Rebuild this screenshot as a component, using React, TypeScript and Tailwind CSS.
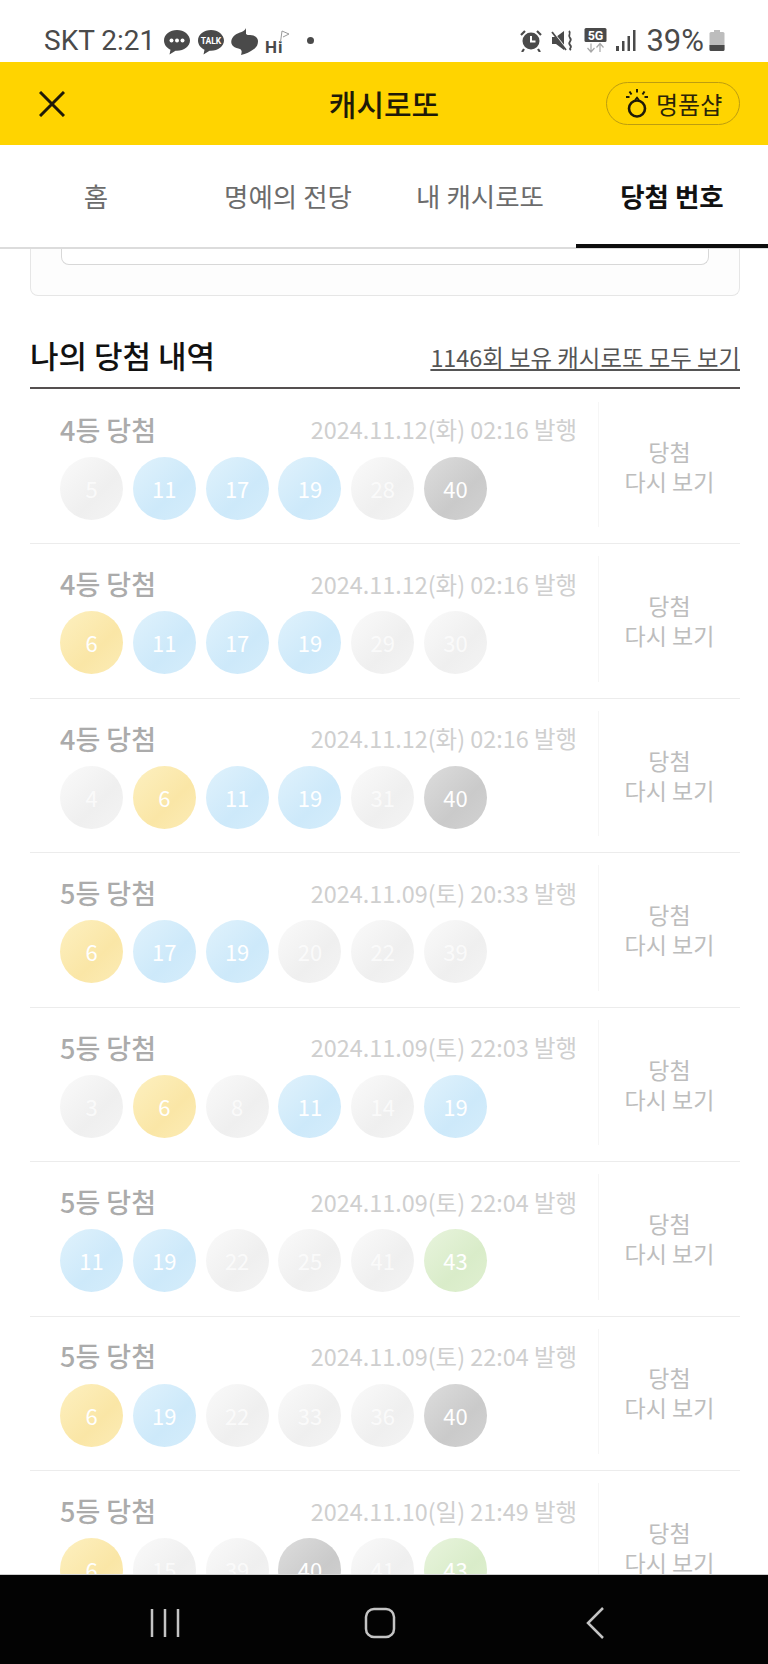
import React from "react";

const KR = "font-['Noto_Sans_CJK_KR','Noto_Sans',sans-serif]";

type Tone = "g" | "b" | "y" | "d" | "l";

const tones: Record<Tone, string> = {
  g: "bg-[linear-gradient(135deg,#fafafa_0%,#efefef_60%,#f4f4f4_100%)] text-white/70",
  b: "bg-[linear-gradient(135deg,#e0f2fc_0%,#cde9fa_60%,#d5edfb_100%)] text-white",
  y: "bg-[linear-gradient(135deg,#fdf0c0_0%,#fae6a6_60%,#fcecb6_100%)] text-white",
  d: "bg-[linear-gradient(135deg,#dddddd_0%,#cacaca_60%,#d2d2d2_100%)] text-white",
  l: "bg-[linear-gradient(135deg,#e8f4dd_0%,#d9ecc9_60%,#e0f0d1_100%)] text-white",
};

type Row = { title: string; date: string; balls: [number, Tone][] };

const rows: Row[] = [
  { title: "4등 당첨", date: "2024.11.12(화) 02:16 발행", balls: [[5, "g"], [11, "b"], [17, "b"], [19, "b"], [28, "g"], [40, "d"]] },
  { title: "4등 당첨", date: "2024.11.12(화) 02:16 발행", balls: [[6, "y"], [11, "b"], [17, "b"], [19, "b"], [29, "g"], [30, "g"]] },
  { title: "4등 당첨", date: "2024.11.12(화) 02:16 발행", balls: [[4, "g"], [6, "y"], [11, "b"], [19, "b"], [31, "g"], [40, "d"]] },
  { title: "5등 당첨", date: "2024.11.09(토) 20:33 발행", balls: [[6, "y"], [17, "b"], [19, "b"], [20, "g"], [22, "g"], [39, "g"]] },
  { title: "5등 당첨", date: "2024.11.09(토) 22:03 발행", balls: [[3, "g"], [6, "y"], [8, "g"], [11, "b"], [14, "g"], [19, "b"]] },
  { title: "5등 당첨", date: "2024.11.09(토) 22:04 발행", balls: [[11, "b"], [19, "b"], [22, "g"], [25, "g"], [41, "g"], [43, "l"]] },
  { title: "5등 당첨", date: "2024.11.09(토) 22:04 발행", balls: [[6, "y"], [19, "b"], [22, "g"], [33, "g"], [36, "g"], [40, "d"]] },
  { title: "5등 당첨", date: "2024.11.10(일) 21:49 발행", balls: [[6, "y"], [15, "g"], [39, "g"], [40, "d"], [41, "g"], [43, "l"]] },
];

function Ball({ n, t }: { n: number; t: Tone }) {
  return (
    <div className={`flex h-[63px] w-[63px] shrink-0 items-center justify-center rounded-full text-[22px] ${tones[t]}`}>
      {n}
    </div>
  );
}

function ResultRow({ row }: { row: Row }) {
  return (
    <div className="flex h-[154.46px] shrink-0 border-b border-[#ececec] pt-3 pb-4">
      <div className="w-[569px] shrink-0 border-r border-[#f6f6f6] pr-[21px] pl-[30px] pt-[10px]">
        <div className="flex h-9 items-center justify-between">
          <span className="text-[27px] font-medium text-[#ababab]">{row.title}</span>
          <span className="text-[23.4px] text-[#cfcfcf]">{row.date}</span>
        </div>
        <div className="mt-[9px] flex gap-[9.8px]">
          {row.balls.map(([n, t], i) => (
            <Ball key={i} n={n} t={t} />
          ))}
        </div>
      </div>
      <div className="flex flex-1 flex-col items-center justify-center pt-[2px] text-[23px] leading-[30px] text-[#bdbdbd]">
        <span>당첨</span>
        <span>다시 보기</span>
      </div>
    </div>
  );
}

const ink = "#4a4a4a";

function StatusBar() {
  return (
    <div className="relative h-[62px] shrink-0 bg-white">
      <div className="flex h-full items-center pl-[44px] pr-[43px] pt-[21px] pb-[2px]">
        <span className="w-[109px] whitespace-nowrap font-['Roboto',sans-serif] text-[28px] leading-none text-[#4a4a4a]">SKT 2:21</span>
        {/* kakao-style notification icons */}
        <svg className="ml-[11px] mt-[3px]" width="126" height="28" viewBox="0 0 126 28">
          <path d="M13 2C6 2 0 6.500 0 12.500c0 4 2.600 7.400 6.500 9.200L5.500 26.500l6-3.800c.5 0 1 .1 1.500.1 7 0 13-4.600 13-10.300S20 2 13 2z" fill={ink} />
          <circle cx="7.500" cy="12.500" r="2" fill="#fff" />
          <circle cx="13" cy="12.500" r="2" fill="#fff" />
          <circle cx="18.500" cy="12.500" r="2" fill="#fff" />
          <path d="M47 2c-7 0-13 4.500-13 10.500 0 4 2.600 7.400 6.500 9.200l-1 4.800 6-3.800c.5 0 1 .1 1.500.1 7 0 13-4.600 13-10.300S54 2 47 2z" fill={ink} />
          <text x="47" y="16" textAnchor="middle" fontSize="8.500" fontWeight="700" fill="#fff" fontFamily="Roboto, sans-serif">TALK</text>
          <path d="M82 0c-1 4-7 4-11 7-4 3-5 8-2 11 2 2 5 2 7 3 2 1 2 3 1 6 5-1 9-3 13-6 3-2 4-5 4-8 0-3-3-6-8-6-2 0-3 0-4-1 0-2 0-4 0-6z" fill={ink} />
          <text x="101" y="25" fontSize="17" fontWeight="700" fill={ink} fontFamily="Roboto, sans-serif" letterSpacing="1">Hi</text>
          <path d="M116.500 14 118 3l7 3-6 3" fill="none" stroke="#9a9a9a" strokeWidth="1" />
        </svg>
        <span className="ml-[17px] h-[7px] w-[7px] rounded-full bg-[#4a4a4a]" />

        <div className="ml-auto flex items-center">
          {/* alarm */}
          <svg width="22" height="23" viewBox="0 0 22 23">
            <circle cx="11" cy="12" r="8.500" fill={ink} />
            <path d="M11 7v5.500h4.500" fill="none" stroke="#fff" strokeWidth="2" />
            <path d="M1 6l4-4M21 6l-4-4M4 20l-2 3M18 20l2 3" stroke={ink} strokeWidth="2.200" />
          </svg>
          {/* muted speaker */}
          <svg className="ml-[9px]" width="23" height="23" viewBox="0 0 23 23">
            <path d="M1 8h4l8-6v19l-8-6H1z" fill={ink} />
            <path d="M1 2l15 19" stroke="#fff" strokeWidth="2" />
            <path d="M1 3l14 18" stroke={ink} strokeWidth="1.800" />
            <path d="M18 2c3 3-2 4 1 7s-3 4 0 7-2 3 1 5" fill="none" stroke={ink} strokeWidth="1.800" />
          </svg>
          {/* 5G with data arrows */}
          <svg className="ml-[10px]" width="23" height="25" viewBox="0 0 23 25">
            <rect x="0.500" y="0" width="22" height="14" rx="1.500" fill={ink} />
            <text x="11.500" y="12" textAnchor="middle" fontSize="12.500" fontWeight="700" fill="#fff" fontFamily="Roboto, sans-serif">5G</text>
            <path d="M7 15.500v8M3.500 20l3.500 4 3.500-4" fill="none" stroke="#a8a8a8" strokeWidth="1.200" />
            <path d="M16 24v-8M12.500 19.500 16 15.500l3.500 4" fill="none" stroke="#a8a8a8" strokeWidth="1.200" />
          </svg>
          {/* signal bars */}
          <svg className="ml-[9px]" width="20" height="21" viewBox="0 0 20 21">
            <rect x="0" y="16" width="3" height="5" fill={ink} />
            <rect x="6" y="11" width="2.500" height="10" fill={ink} />
            <rect x="11.500" y="6" width="2.500" height="15" fill={ink} />
            <rect x="17" y="0" width="2.500" height="21" fill={ink} />
          </svg>
          <span className="ml-[10px] font-['Roboto',sans-serif] text-[31px] leading-none text-[#4a4a4a]">39%</span>
          {/* battery */}
          <svg className="ml-[5px]" width="16" height="21" viewBox="0 0 16 21">
            <rect x="5" y="0" width="6" height="2" fill="#bdbdbd" />
            <rect x="0.500" y="2" width="15" height="19" rx="1.500" fill="#bdbdbd" />
            <path d="M.5 15h15v4.500a1.500 1.500 0 0 1-1.500 1.500H2a1.500 1.500 0 0 1-1.500-1.500z" fill={ink} />
          </svg>
        </div>
      </div>
    </div>
  );
}

function Header() {
  return (
    <div className="relative flex h-[83px] shrink-0 items-center justify-center bg-[#ffd400]">
      <svg className="absolute left-[39px] top-[29px]" width="26" height="26" viewBox="0 0 26 26">
        <path d="M1 1l24 24M25 1 1 25" stroke="#1f1a08" strokeWidth="3" />
      </svg>
      <span className="text-[30px] font-medium text-[#1e1a08]">캐시로또</span>
      <div className="absolute left-[606px] top-[20px] flex h-[43px] w-[134px] items-center rounded-full border border-[#bd9d10] pl-[19px]">
        <svg width="22" height="29" viewBox="0 0 22 29">
          <circle cx="11" cy="19.500" r="8" fill="none" stroke="#1e1a08" strokeWidth="2.600" />
          <path d="M9 11 11 8.500 13 11" fill="none" stroke="#1e1a08" strokeWidth="1.600" />
          <path d="M11 0v3.500M3.500 2.500l2 3M18.500 2.500l-2 3M0 8h3.500M22 8h-3.500" stroke="#1e1a08" strokeWidth="2" />
        </svg>
        <span className="ml-[8px] text-[24px] text-[#2a2408]">명품샵</span>
      </div>
    </div>
  );
}

function Tabs() {
  const items = ["홈", "명예의 전당", "내 캐시로또", "당첨 번호"];
  return (
    <div className="grid h-[104px] shrink-0 grid-cols-4 border-b-2 border-[#dcdcdc] bg-white">
      {items.map((label, i) => (
        <div
          key={label}
          className={
            i === 3
              ? "-mb-[1px] flex items-center justify-center border-b-4 border-[#0d0d0d] text-[26.5px] font-bold text-[#111]"
              : "flex items-center justify-center text-[26.5px] text-[#6c6c6c]"
          }
        >
          <span className={i === 3 ? "mt-[2px]" : "mt-[-1px]"}>{label}</span>
        </div>
      ))}
    </div>
  );
}

function NavBar() {
  return (
    <div className="relative h-[90px] shrink-0 border-t border-[#cfcfcf] bg-[#030303]">
      <svg className="absolute left-0 top-0" width="768" height="90" viewBox="0 0 768 90">
        <path d="M152 34v28M165 34v28M178 34v28" stroke="#c4c4c4" strokeWidth="2.500" />
        <rect x="366" y="34" width="28" height="28" rx="8" fill="none" stroke="#c4c4c4" strokeWidth="2.500" />
        <path d="M603 33 588 48l15 15" fill="none" stroke="#c4c4c4" strokeWidth="2.500" />
      </svg>
    </div>
  );
}

export default function App() {
  return (
    <div className={`relative flex h-[1664px] w-[768px] flex-col overflow-hidden bg-white ${KR}`}>
      <StatusBar />
      <Header />
      <Tabs />
      <div className="min-h-0 flex-1 overflow-hidden pl-[30px] pr-[28px]">
        <div className="h-[47px] rounded-b-lg border-x border-b border-[#e6e6e6] bg-[#fdfdfd] px-[30px]">
          <div className="h-4 rounded-b-lg border-x border-b border-[#d8d8d8] bg-white" />
        </div>
        <div className="flex h-[93px] items-end justify-between border-b-2 border-[#555050] pb-[12px]">
          <h2 className="text-[31px] font-medium leading-[40px] text-[#111]">나의 당첨 내역</h2>
          <a className="mb-[2px] text-[23.4px] leading-[32px] text-[#555] underline">1146회 보유 캐시로또 모두 보기</a>
        </div>
        <div className="mt-[1px] flex flex-col">
          {rows.map((r, i) => (
            <ResultRow key={i} row={r} />
          ))}
        </div>
      </div>
      <NavBar />
    </div>
  );
}
